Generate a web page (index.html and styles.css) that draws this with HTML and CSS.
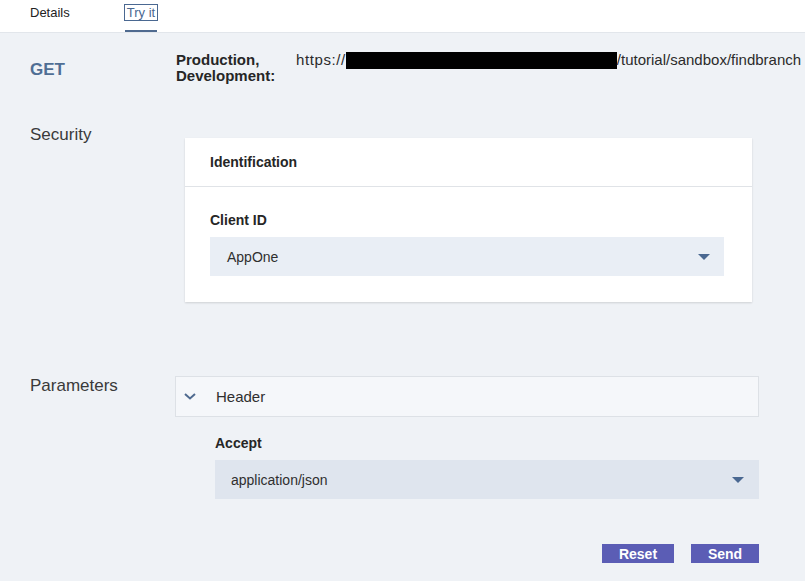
FILE: index.html
```html
<!DOCTYPE html>
<html lang="en">
<head>
<meta charset="utf-8">
<title>Try it</title>
<link rel="stylesheet" href="styles.css">
</head>
<body>
<nav class="tabs">
  <a class="tab">Details</a>
  <a class="tab tab-active"><span class="tab-focus">Try it</span></a>
</nav>
<main class="main">
  <section class="row row-endpoint">
    <div class="method">GET</div>
    <div class="env">Production,<br>Development:</div>
    <div class="url"><span class="scheme">https://</span><span class="redact"></span>/tutorial/sandbox/findbranch</div>
  </section>

  <section class="row row-security">
    <div class="label">Security</div>
    <div class="card">
      <div class="card-head">Identification</div>
      <div class="card-body">
        <div class="field-label">Client ID</div>
        <div class="select select-light">
          <span>AppOne</span>
          <svg class="caret" width="12" height="6" viewBox="0 0 12 6"><path d="M0 0H12L6 6Z" fill="#4a6891"/></svg>
        </div>
      </div>
    </div>
  </section>

  <section class="row row-params">
    <div class="label">Parameters</div>
    <div class="params">
      <div class="accordion">
        <svg class="chevron" width="12" height="7" viewBox="0 0 12 7"><path d="M1 1L6 5.5L11 1" fill="none" stroke="#4f6a8f" stroke-width="2"/></svg>
        <span>Header</span>
      </div>
      <div class="params-body">
        <div class="field-label">Accept</div>
        <div class="select select-dark">
          <span>application/json</span>
          <svg class="caret" width="12" height="6" viewBox="0 0 12 6"><path d="M0 0H12L6 6Z" fill="#4a6891"/></svg>
        </div>
      </div>
      <div class="actions">
        <button class="btn btn-reset">Reset</button>
        <button class="btn btn-send">Send</button>
      </div>
    </div>
  </section>
</main>
</body>
</html>
```
FILE: styles.css
```css
html, body {
  margin: 0;
  padding: 0;
}
body {
  background: #eff2f6;
  font-family: "Liberation Sans", Arial, sans-serif;
  color: #2b2b2b;
  overflow: hidden;
  width: 805px;
  height: 581px;
}
.tabs {
  height: 32px;
  background: #ffffff;
  border-bottom: 1px solid #e2e6eb;
  display: flex;
  padding-left: 30px;
  gap: 55px;
}
.tab {
  font-size: 13px;
  line-height: 15px;
  padding-top: 5px;
  color: #222;
  position: relative;
  height: 27px;
  box-sizing: border-box;
}
.tab-active {
  color: #4a6891;
  height: 32px;
}
.tab-active::after {
  content: "";
  position: absolute;
  left: 0;
  right: 0;
  bottom: 0;
  height: 2px;
  background: #4f6a8f;
}
.tab-focus {
  outline: 1px solid #4a6891;
  display: inline-block;
  padding: 0 2px;
}

.main {
  padding-left: 30px;
}
.row {
  display: flex;
  white-space: nowrap;
}
.row-endpoint {
  margin-top: 19px;
  align-items: flex-start;
}
.method {
  width: 146px;
  flex: none;
  font-size: 17px;
  line-height: 20px;
  font-weight: bold;
  color: #4f6e94;
  margin-top: 8px;
}
.env {
  width: 120px;
  flex: none;
  font-size: 15px;
  line-height: 16px;
  font-weight: bold;
  color: #262626;
}
.url {
  font-size: 15px;
  line-height: 16px;
  color: #2b2b2b;
}
.scheme {
  letter-spacing: 0.6px;
}
.redact {
  display: inline-block;
  width: 271px;
  height: 17px;
  background: #000;
  vertical-align: -4px;
}

.label {
  width: 145px;
  flex: none;
  font-size: 17px;
  line-height: 20px;
  color: #3a3a3a;
}
.row-security {
  margin-top: 41px;
}
.card {
  margin-top: 13px;
  margin-left: 10px;
  width: 567px;
  background: #fff;
  box-shadow: 0 1px 2px rgba(0, 0, 0, 0.14);
}
.card-head {
  height: 49px;
  box-sizing: border-box;
  padding: 16px 25px 0;
  font-size: 14px;
  line-height: 16px;
  font-weight: bold;
  color: #262626;
  border-bottom: 1px solid #e0e3e7;
}
.card-body {
  padding: 24px 28px 26px 25px;
}
.field-label {
  font-size: 14px;
  line-height: 18px;
  font-weight: bold;
  color: #262626;
  margin-bottom: 8px;
}
.select {
  height: 39px;
  display: flex;
  align-items: center;
  justify-content: space-between;
  font-size: 14px;
  color: #2f2f2f;
  box-sizing: border-box;
}
.select-light {
  background: #e9eef5;
  padding: 0 14px 0 17px;
}
.select-dark {
  background: #dfe5ee;
  padding: 0 15px 0 16px;
}
.caret {
  display: block;
}

.row-params {
  margin-top: 74px;
}
.params {
  width: 584px;
}
.accordion {
  height: 41px;
  box-sizing: border-box;
  border: 1px solid #dde1e6;
  background: #f5f7fa;
  display: flex;
  align-items: center;
  padding-left: 8px;
  font-size: 15px;
  color: #2f2f2f;
}
.chevron {
  display: block;
  margin-right: 20px;
}
.params-body {
  margin-left: 40px;
  padding-top: 17px;
}
.actions {
  display: flex;
  justify-content: flex-end;
  gap: 17px;
  margin-top: 45px;
}
.btn {
  height: 19px;
  border: none;
  padding: 0;
  background: #5b5db5;
  color: #fff;
  font-family: "Liberation Sans", Arial, sans-serif;
  font-size: 14px;
  font-weight: bold;
  line-height: 20px;
}
.btn-reset { width: 72px; }
.btn-send { width: 68px; }
```
